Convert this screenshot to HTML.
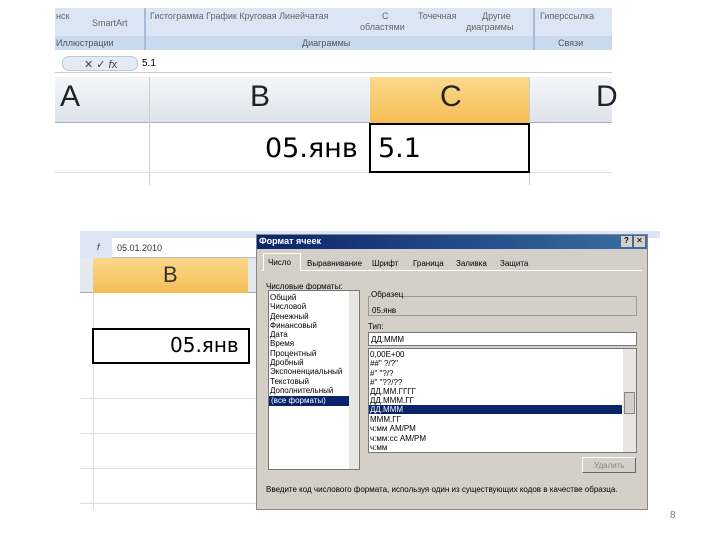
<!DOCTYPE html><html><head><meta charset="utf-8"><style>
*{margin:0;padding:0;box-sizing:border-box}
body{width:720px;height:540px;background:#fff;position:relative;overflow:hidden;font-family:"Liberation Sans","DejaVu Sans",sans-serif}
.a{position:absolute}
.t{font-size:9px;color:#333;white-space:nowrap}
.s{font-size:8px;color:#000;white-space:nowrap;line-height:9.5px}
</style></head><body>
<!-- top image -->
<div class="a" style="left:55px;top:8px;width:557px;height:42px;background:#dbe5f3"></div>
<div class="a" style="left:55px;top:36px;width:557px;height:14px;background:#c9d9ee"></div>
<div class="a" style="left:144px;top:8px;width:2px;height:42px;background:#aabbd6"></div>
<div class="a" style="left:533px;top:8px;width:2px;height:42px;background:#aabbd6"></div>
<div class="a t" style="left:56px;top:11px;color:#666">нск</div>
<div class="a t" style="left:92px;top:18px;color:#666">SmartArt</div>
<div class="a t" style="left:150px;top:11px;color:#666">Гистограмма График Круговая Линейчатая</div>
<div class="a t" style="left:382px;top:11px;color:#666">С</div>
<div class="a t" style="left:360px;top:22px;color:#666">областями</div>
<div class="a t" style="left:418px;top:11px;color:#666">Точечная</div>
<div class="a t" style="left:482px;top:11px;color:#666">Другие</div>
<div class="a t" style="left:466px;top:22px;color:#666">диаграммы</div>
<div class="a t" style="left:540px;top:11px;color:#666">Гиперссылка</div>
<div class="a t" style="left:56px;top:38px;color:#555">Иллюстрации</div>
<div class="a t" style="left:302px;top:38px;color:#555">Диаграммы</div>
<div class="a t" style="left:558px;top:38px;color:#555">Связи</div>
<div class="a" style="left:55px;top:55px;width:557px;height:18px;background:#fff;border-bottom:1px solid #ccc"></div>
<div class="a" style="left:62px;top:56px;width:76px;height:15px;background:#e4ebf5;border-radius:7px;border:1px solid #b9c9dd"></div>
<div class="a t" style="left:84px;top:58px;font-size:11px;color:#444">✕ ✓ <i>f</i>x</div>
<div class="a t" style="left:142px;top:58px;font-size:10px;color:#000">5.1</div>
<div class="a" style="left:55px;top:77px;width:557px;height:46px;background:linear-gradient(#f4f6fa,#dde3ec);border-bottom:1px solid #aab"></div>
<div class="a" style="left:370px;top:77px;width:159px;height:46px;background:linear-gradient(#fbd98b,#f5bd55)"></div>
<div class="a" style="left:149px;top:77px;width:1px;height:108px;background:#ccc"></div>
<div class="a" style="left:529px;top:77px;width:1px;height:108px;background:#ccc"></div>
<div class="a" style="left:60px;top:80px;font-size:30px;color:#222">A</div>
<div class="a" style="left:250px;top:80px;font-size:30px;color:#222">B</div>
<div class="a" style="left:440px;top:80px;font-size:30px;color:#222">C</div>
<div class="a" style="left:596px;top:80px;font-size:30px;color:#222">D</div>
<div class="a" style="left:55px;top:172px;width:557px;height:1px;background:#ddd"></div>
<div class="a" style="left:265px;top:133px;font-size:27px;color:#000;font-family:'DejaVu Sans',sans-serif">05.янв</div>
<div class="a" style="left:369px;top:123px;width:161px;height:50px;border:2px solid #000"></div>
<div class="a" style="left:378px;top:133px;font-size:27px;color:#000;font-family:'DejaVu Sans',sans-serif">5.1</div>
<!-- bottom image -->
<div class="a" style="left:80px;top:231px;width:580px;height:7px;background:#dbe5f3"></div>
<div class="a" style="left:80px;top:238px;width:178px;height:20px;background:#fff;border-bottom:1px solid #bbb"></div>
<div class="a" style="left:80px;top:238px;width:32px;height:20px;background:#dde6f2"></div>
<div class="a t" style="left:97px;top:242px;font-style:italic">f</div>
<div class="a t" style="left:117px;top:243px">05.01.2010</div>
<div class="a" style="left:80px;top:258px;width:178px;height:35px;background:#e4e9f0;border-bottom:1px solid #aab"></div>
<div class="a" style="left:93px;top:258px;width:155px;height:35px;background:linear-gradient(#fbd98b,#f5bd55)"></div>
<div class="a" style="left:163px;top:262px;font-size:22px;color:#333">B</div>
<div class="a" style="left:93px;top:293px;width:1px;height:217px;background:#ddd"></div>
<div class="a" style="left:80px;top:398px;width:178px;height:1px;background:#ddd"></div>
<div class="a" style="left:80px;top:433px;width:178px;height:1px;background:#ddd"></div>
<div class="a" style="left:80px;top:468px;width:178px;height:1px;background:#ddd"></div>
<div class="a" style="left:80px;top:503px;width:178px;height:1px;background:#ddd"></div>
<div class="a" style="left:92px;top:328px;width:158px;height:36px;border:2px solid #000"></div>
<div class="a" style="left:170px;top:333px;font-size:20px;color:#000;font-family:'DejaVu Sans',sans-serif">05.янв</div>
<!-- dialog -->
<div class="a" style="left:256px;top:234px;width:392px;height:276px;background:#d4d0c8;border:1px solid #888"></div>
<div class="a" style="left:257px;top:235px;width:390px;height:14px;background:linear-gradient(90deg,#0a246a,#3a6ea5)"></div>
<div class="a" style="left:259px;top:236px;font-size:9px;font-weight:bold;color:#fff">Формат ячеек</div>
<div class="a" style="left:621px;top:236px;width:11px;height:11px;background:#d4d0c8;font-size:8px;text-align:center;font-weight:bold">?</div>
<div class="a" style="left:634px;top:236px;width:11px;height:11px;background:#d4d0c8;font-size:8px;text-align:center;font-weight:bold">✕</div>
<div class="a" style="left:262px;top:270px;width:380px;height:1px;background:#fff"></div>
<div class="a" style="left:263px;top:253px;width:38px;height:18px;background:#d4d0c8;border:1px solid #fff;border-bottom:none"></div>
<div class="a s" style="left:268px;top:258px">Число</div>
<div class="a s" style="left:307px;top:259px">Выравнивание</div>
<div class="a s" style="left:372px;top:259px">Шрифт</div>
<div class="a s" style="left:413px;top:259px">Граница</div>
<div class="a s" style="left:456px;top:259px">Заливка</div>
<div class="a s" style="left:500px;top:259px">Защита</div>
<div class="a s" style="left:266px;top:282px">Числовые форматы:</div>
<div class="a" style="left:268px;top:290px;width:92px;height:180px;background:#fff;border:1px solid #777"></div>
<div class="a" style="left:349px;top:291px;width:10px;height:178px;background:#e8e6e0"></div>
<div class="a s" style="left:270px;top:293px;line-height:9.3px">Общий<br>Числовой<br>Денежный<br>Финансовый<br>Дата<br>Время<br>Процентный<br>Дробный<br>Экспоненциальный<br>Текстовый<br>Дополнительный</div>
<div class="a" style="left:269px;top:396px;width:80px;height:10px;background:#0a246a"></div>
<div class="a s" style="left:271px;top:396px;color:#fff">(все форматы)</div>
<div class="a" style="left:368px;top:296px;width:269px;height:20px;border:1px solid #999"></div>
<div class="a s" style="left:371px;top:290px;background:#d4d0c8">Образец</div>
<div class="a s" style="left:372px;top:306px">05.янв</div>
<div class="a s" style="left:368px;top:322px">Тип:</div>
<div class="a" style="left:368px;top:332px;width:269px;height:14px;background:#fff;border:1px solid #777"></div>
<div class="a s" style="left:371px;top:335px">ДД.МММ</div>
<div class="a" style="left:368px;top:348px;width:269px;height:105px;background:#fff;border:1px solid #777"></div>
<div class="a" style="left:623px;top:349px;width:13px;height:103px;background:#e8e6e0"></div>
<div class="a" style="left:624px;top:392px;width:11px;height:22px;background:#d4d0c8;border:1px solid #888"></div>
<div class="a s" style="left:370px;top:350px;line-height:9.3px">0,00E+00<br>##" ?/?"<br>#" "?/?<br>#" "??/??<br>ДД.ММ.ГГГГ<br>ДД.МММ.ГГ</div>
<div class="a" style="left:369px;top:405px;width:253px;height:9px;background:#0a246a"></div>
<div class="a s" style="left:370px;top:405px;color:#fff">ДД.МММ</div>
<div class="a s" style="left:370px;top:415px;line-height:9.4px">МММ.ГГ<br>ч:мм AM/PM<br>ч:мм:сс AM/PM<br>ч:мм</div>
<div class="a" style="left:582px;top:457px;width:54px;height:16px;background:#d4d0c8;border:1px solid #fff;border-right-color:#666;border-bottom-color:#666"></div>
<div class="a s" style="left:594px;top:461px;color:#888">Удалить</div>
<div class="a s" style="left:266px;top:485px">Введите код числового формата, используя один из существующих кодов в качестве образца.</div>
<div class="a" style="left:670px;top:510px;font-size:10px;color:#777">8</div>
</body></html>
